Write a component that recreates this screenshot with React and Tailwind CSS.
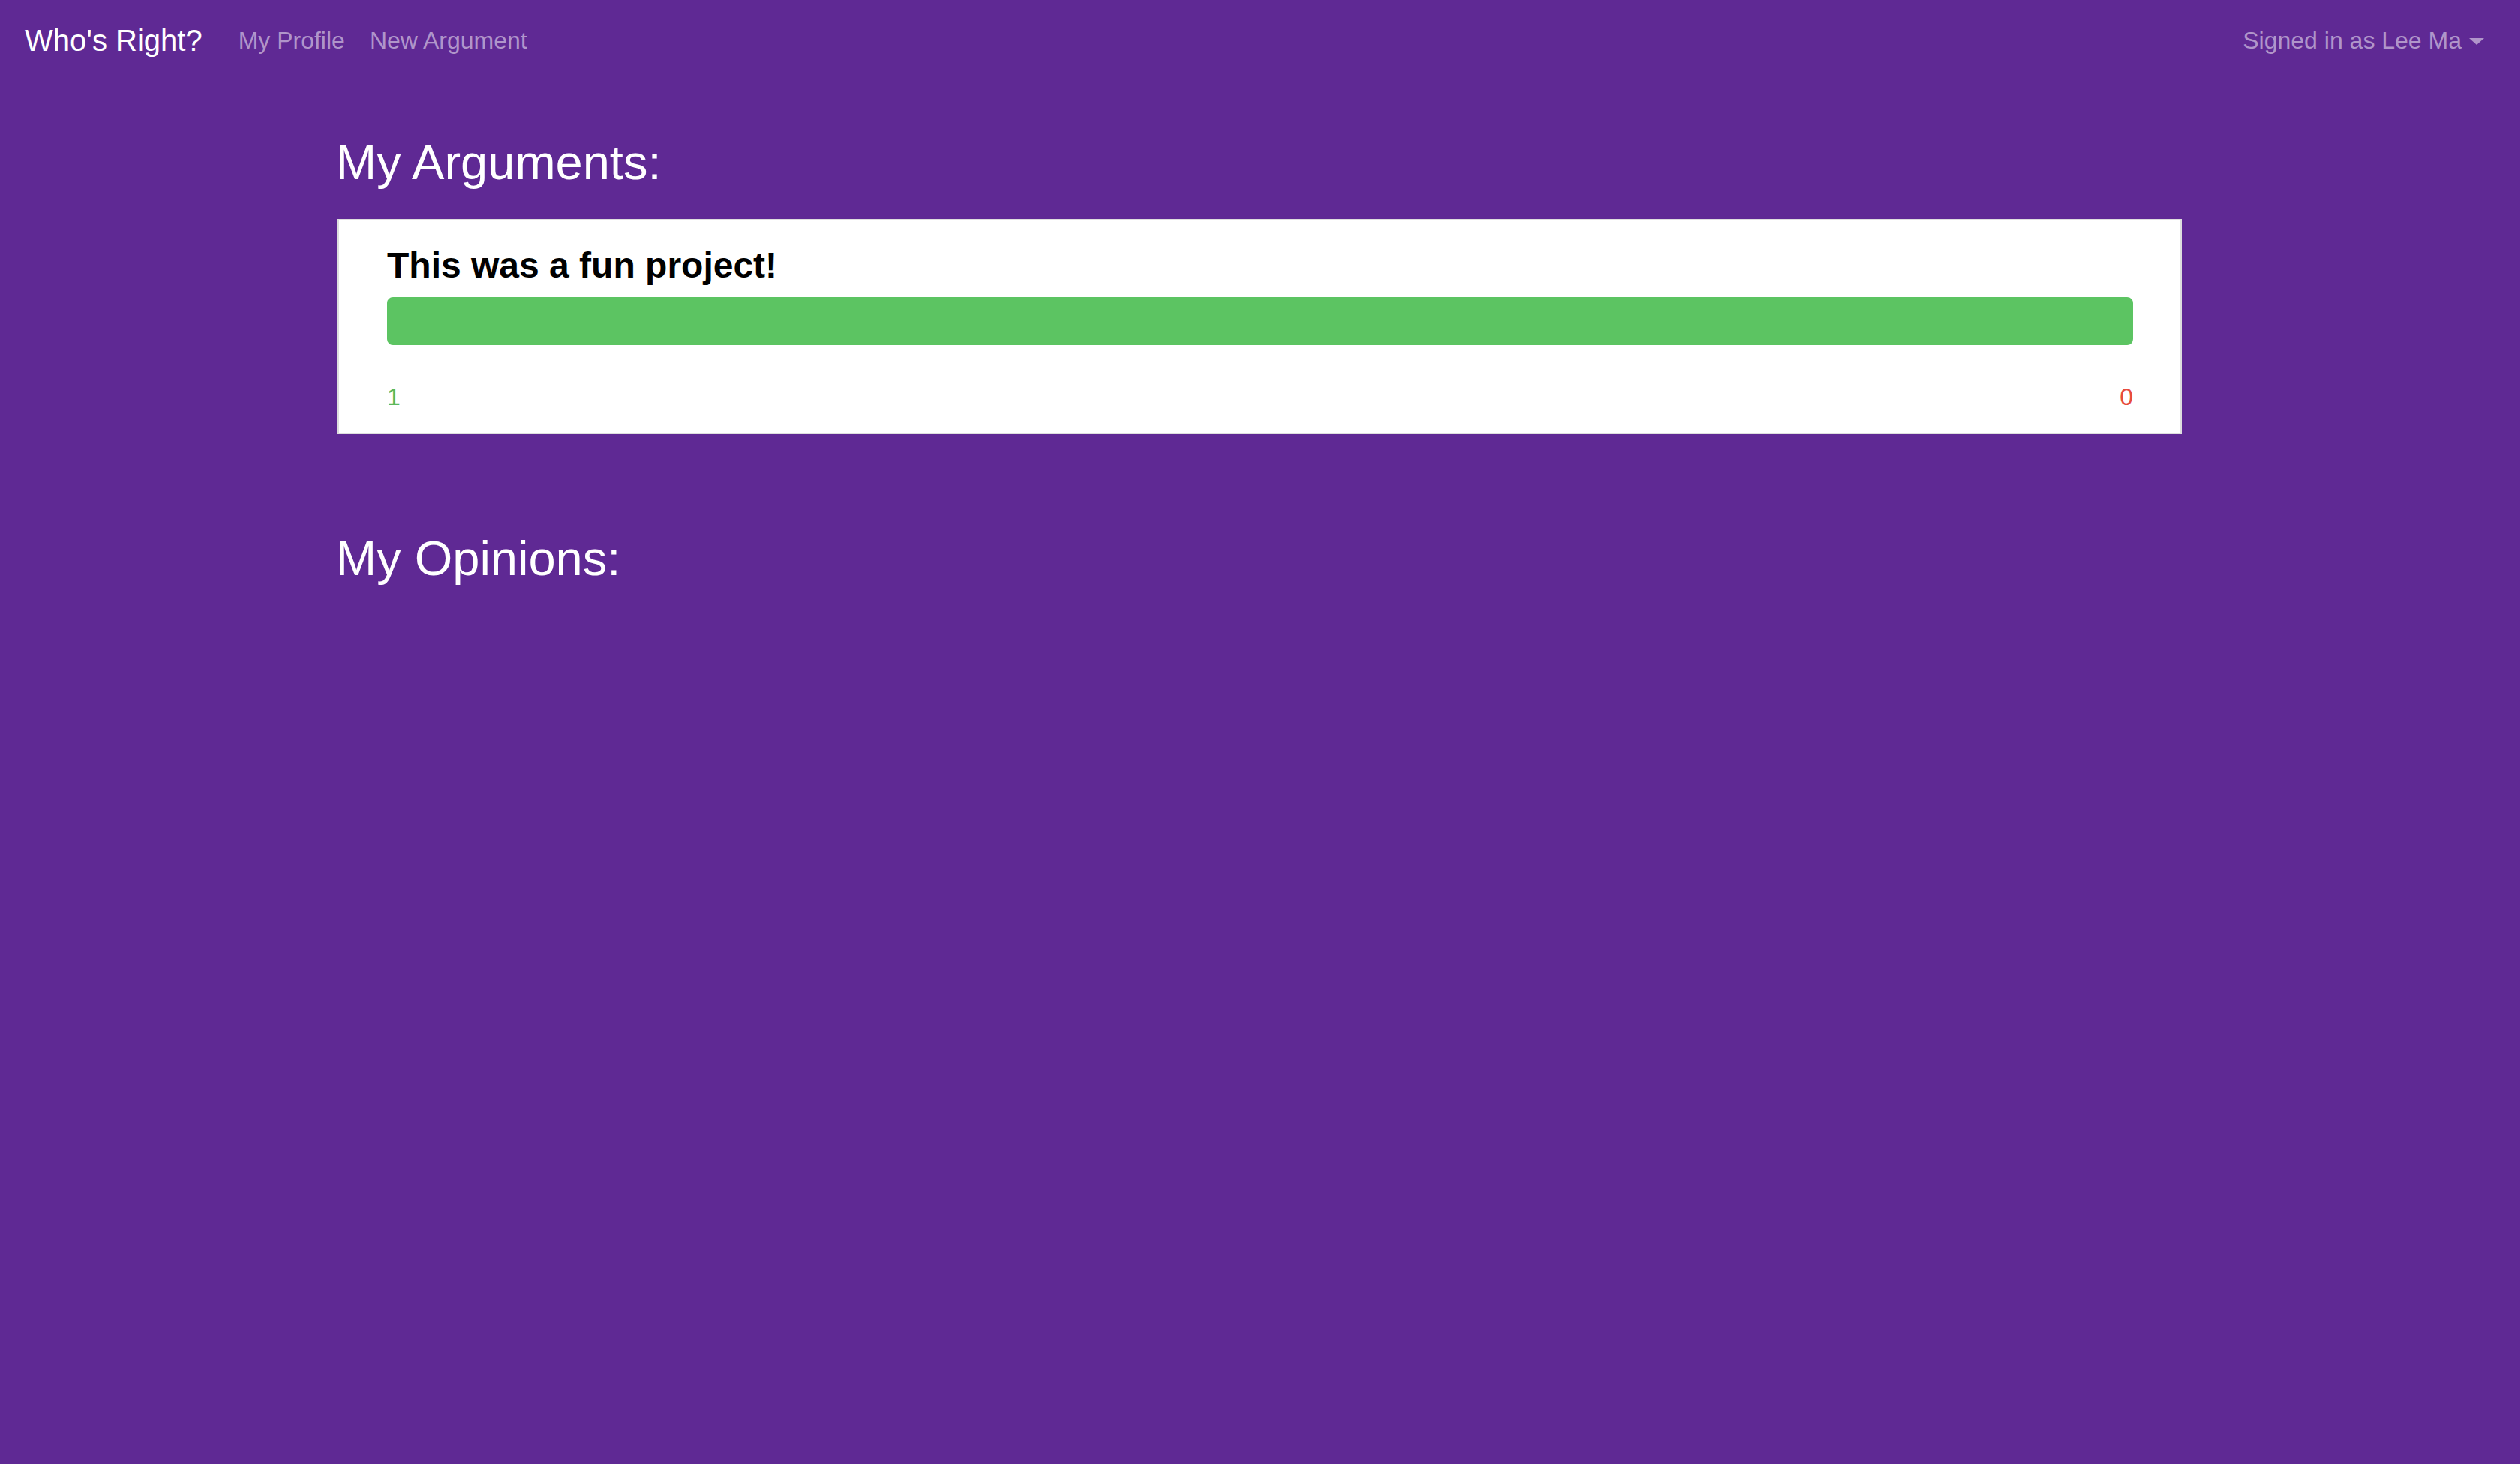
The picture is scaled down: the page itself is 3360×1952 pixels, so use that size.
const argumentsList = [{ id: 1, title: "This was a fun project!", agree: 1, disagree: 0 }];

function ArgumentCard({ argument }) {
  const total = argument.agree + argument.disagree;
  const agreePct = total ? (argument.agree / total) * 100 : 50;

  return (
    <div className="border-2 border-[#dedede] bg-white pb-[28px] pl-[64px] pr-[63px] pt-[32px]">
      <div className="text-[48px] font-bold leading-[56px] text-black">
        {argument.title}
      </div>
      <div className="mt-[14px] flex h-[64px] overflow-hidden rounded-[8px]">
        <div className="h-full bg-[#5cc462]" style={{ width: `${agreePct}%` }} />
        <div className="h-full flex-1 bg-[#e74c3c]" />
      </div>
      <div className="mt-[49px] flex justify-between text-[32px] leading-[40px]">
        <span className="text-[#5cb85c]">{argument.agree}</span>
        <span className="text-[#e74c3c]">{argument.disagree}</span>
      </div>
    </div>
  );
}

export default function App() {
  return (
    <div className="min-h-[1952px] w-full bg-[#5f2994] font-['Liberation_Sans',Helvetica,Arial,sans-serif]">
      <nav className="flex items-center justify-between pb-[23px] pl-[33px] pr-[48px] pt-[24px]">
        <div className="flex items-center">
          <span className="mr-[48px] text-[40px] leading-[60px] text-white">
            Who's Right?
          </span>
          <div className="flex items-center gap-[33px] text-[32px] leading-[60px] text-[#b095ca]">
            <span>My Profile</span>
            <span>New Argument</span>
          </div>
        </div>
        <div className="flex items-center text-[32px] leading-[60px] text-[#b095ca]">
          <span>Signed in as Lee Ma</span>
          <span className="ml-[10px] mt-[2px] h-0 w-0 border-l-[10px] border-r-[10px] border-t-[9px] border-l-transparent border-r-transparent border-t-[#b095ca]" />
        </div>
      </nav>

      <main className="pl-[450px] pr-[451px] pt-[71px]">
        <h2 className="-ml-[2px] text-[65px] leading-[78px] text-white">My Arguments:</h2>
        <div className="mt-[36px]">
          {argumentsList.map((a) => (
            <ArgumentCard key={a.id} argument={a} />
          ))}
        </div>
        <h2 className="-ml-[2px] mt-[127px] text-[65px] leading-[78px] text-white">My Opinions:</h2>
      </main>
    </div>
  );
}
